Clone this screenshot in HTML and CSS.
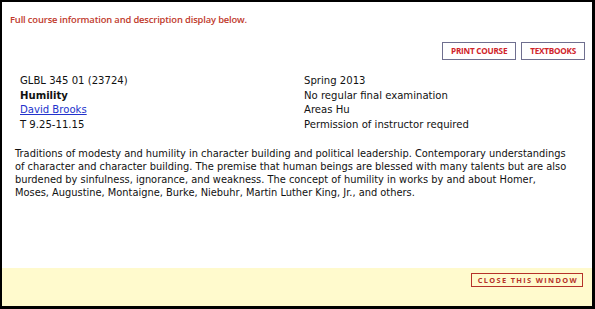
FILE: index.html
```html
<!DOCTYPE html>
<html>
<head>
<meta charset="utf-8">
<link rel="stylesheet" href="styles.css">
</head>
<body>
<div class="frame">
  <main class="content">
    <p class="notice">Full course information and description display below.</p>
    <div class="actions">
      <a class="btn" href="#">PRINT COURSE</a>
      <a class="btn" href="#">TEXTBOOKS</a>
    </div>
    <div class="info">
      <div class="col">
        <div>GLBL 345 01 (23724)</div>
        <div class="title">Humility</div>
        <div><a class="link" href="#">David Brooks</a></div>
        <div>T 9.25-11.15</div>
      </div>
      <div class="col">
        <div>Spring 2013</div>
        <div>No regular final examination</div>
        <div>Areas Hu</div>
        <div>Permission of instructor required</div>
      </div>
    </div>
    <p class="desc">Traditions of modesty and humility in character building and political leadership. Contemporary understandings<br>of character and character building. The premise that human beings are blessed with many talents but are also<br>burdened by sinfulness, ignorance, and weakness. The concept of humility in works by and about Homer,<br>Moses, Augustine, Montaigne, Burke, Niebuhr, Martin Luther King, Jr., and others.</p>
  </main>
  <footer class="footer">
    <a class="close" href="#">CLOSE THIS WINDOW</a>
  </footer>
</div>
</body>
</html>
```

FILE: styles.css
```css
html, body {
  margin: 0;
  padding: 0;
  background: #000;
}
.frame {
  box-sizing: border-box;
  width: 595px;
  height: 309px;
  border-style: solid;
  border-color: #000;
  border-width: 2px 3px 3px 2px;
  background: #fff;
  display: flex;
  flex-direction: column;
}
.content {
  flex: 1;
}
.notice {
  margin: 11px 0 0 8px;
  font-family: "Open Sans", sans-serif;
  font-size: 9.4px;
  font-weight: 600;
  color: #c0392b;
  letter-spacing: -0.15px;
}
.actions {
  display: flex;
  justify-content: flex-end;
  gap: 5px;
  margin: 16px 7px 0 0;
}
.btn {
  display: block;
  border: 1px solid #6f6f8f;
  padding: 3px 8px 3px;
  font-family: "Open Sans", sans-serif;
  font-size: 8.2px;
  font-weight: 700;
  color: #d0242a;
  text-decoration: none;
  letter-spacing: -0.25px;
  line-height: 10px;
}
.info {
  display: grid;
  grid-template-columns: 284px 1fr;
  margin: 14px 0 0 18px;
  font-family: "DejaVu Sans", Verdana, sans-serif;
  font-size: 10.1px;
  line-height: 14.5px;
  color: #111;
}
.title {
  font-weight: bold;
}
.link {
  color: #2233cc;
  text-decoration: underline;
}
.desc {
  margin: 15px 4px 0 13px;
  font-family: "DejaVu Sans", Verdana, sans-serif;
  font-size: 9.85px;
  line-height: 13px;
  color: #111;
  white-space: nowrap;
}
.footer {
  height: 38px;
  background: #fffacd;
  display: flex;
  justify-content: flex-end;
  align-items: flex-start;
  padding: 5px 9px 0 0;
  box-sizing: border-box;
}
.close {
  display: block;
  border: 1px solid #b5322a;
  padding: 1px 4px 1px 6px;
  font-family: "Open Sans", sans-serif;
  font-size: 7.4px;
  font-weight: 700;
  letter-spacing: 1.35px;
  color: #b5322a;
  text-decoration: none;
  line-height: 10px;
}
```
